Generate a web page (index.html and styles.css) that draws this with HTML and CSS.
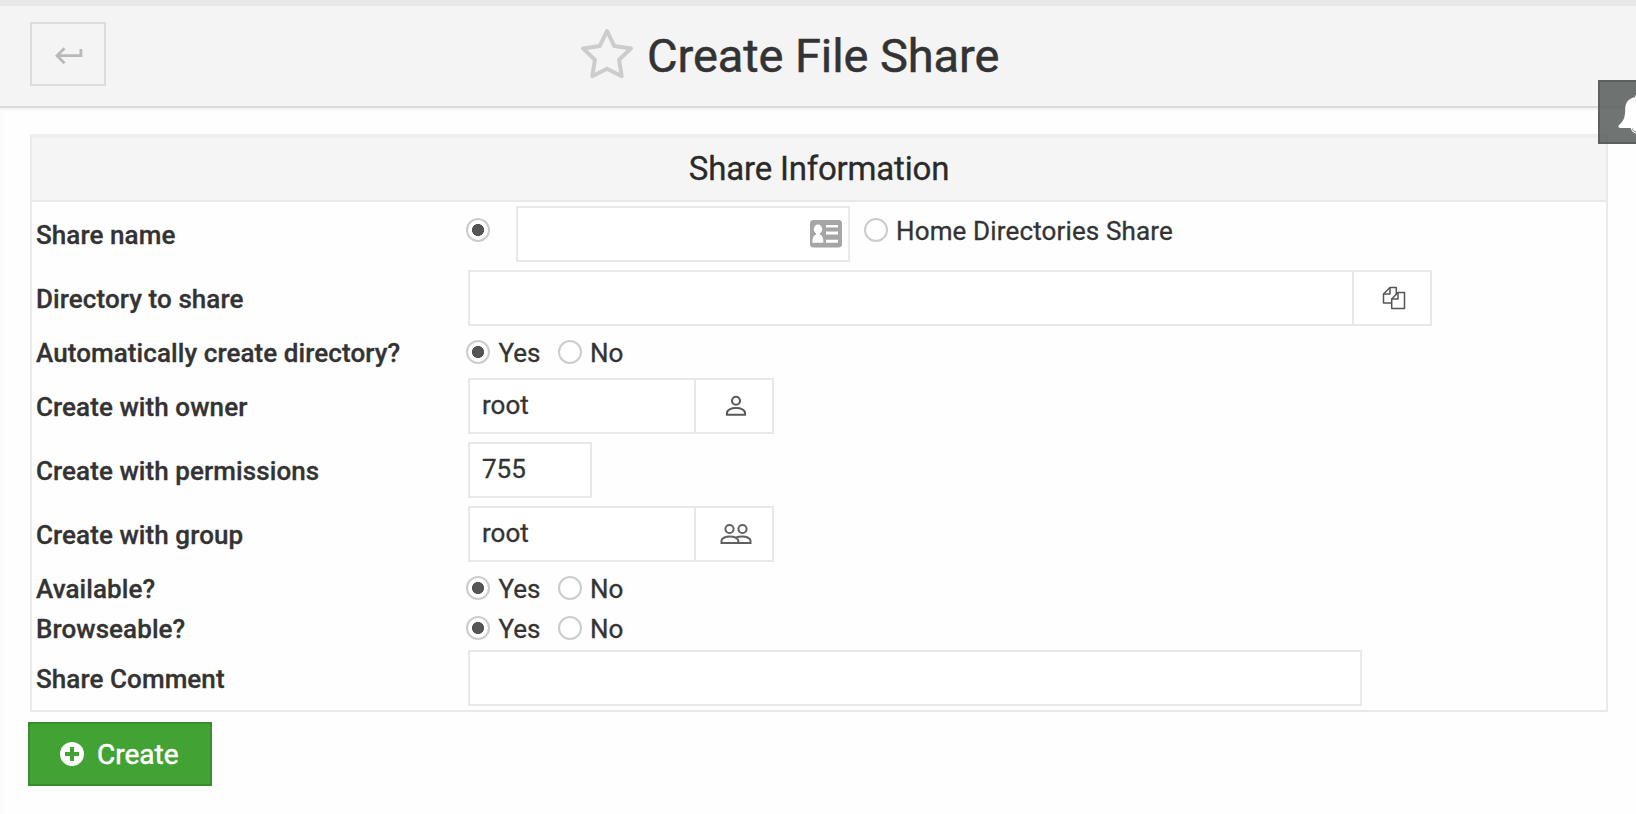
FILE: index.html
```html
<!DOCTYPE html>
<html lang="en">
<head>
<meta charset="utf-8">
<title>Create File Share</title>
<link rel="stylesheet" href="styles.css">
</head>
<body>
<header class="header">
  <button class="back" aria-label="Return">
    <svg width="28" height="18" viewBox="0 0 28 18" fill="none" stroke="#b9b9b9" stroke-width="2.8"><path d="M9.5 1.2 2 8.700l7.500 7.500M2 8.700h23.900V2"/></svg>
  </button>
  <h1 class="title">
    <svg class="star" width="54" height="52" viewBox="0 0 54 52" fill="none" stroke="#ccc" stroke-width="4" stroke-linejoin="round"><path d="M27 3 34.300 18.100 51 20.400 39.100 31.800 41.700 48.200 27 40.700 12.300 48.200 14.900 31.800 3 20.400 19.700 18.100z"/></svg>
    <span class="title-text">Create File Share</span>
  </h1>
</header>

<main class="content">
  <section class="panel">
    <h2 class="panel-head">Share Information</h2>
    <div class="row">
      <div class="label">Share name</div>
      <div class="value value-name">
        <span class="radio radio-on"></span>
        <div class="field field-name">
          <svg width="32" height="28" viewBox="0 0 32 28"><rect width="32" height="27.500" rx="3.500" fill="#a5a5a5"/><g fill="#fff"><ellipse cx="8" cy="9.300" rx="4.200" ry="4.700"/><path d="M6 12.500h4v2c2.500.8 3.400 3.500 3.400 8.300H2.400c0-4.800 1-7.500 3.600-8.300zM16 5h12v2.600H16zM16 11.500h12v3H16zM16 19.700h12v3H16z"/></g></svg>
        </div>
        <span class="radio"></span>
        <span class="option option-home">Home Directories Share</span>
      </div>
    </div>
    <div class="row">
      <div class="label">Directory to share</div>
      <div class="value">
        <div class="field field-dir"></div>
        <button class="picker" aria-label="Choose directory">
          <svg width="24" height="24" viewBox="0 0 24 24" fill="#fff" stroke="#555" stroke-width="1.500" stroke-linejoin="round"><path d="M8 1.500h6.300V17H1.500V8z"/><path d="M8 1.500V8H1.500" fill="none"/><path d="M16 6.500h6.500v16H9.700V13z"/><path d="M16 6.500V13H9.700" fill="none"/></svg>
        </button>
      </div>
    </div>
    <div class="row row-radio">
      <div class="label">Automatically create directory?</div>
      <div class="value value-radio"><span class="radio radio-on"></span><span class="option option-yes">Yes</span><span class="radio"></span><span class="option">No</span></div>
    </div>
    <div class="row">
      <div class="label">Create with owner</div>
      <div class="value">
        <div class="field field-user">root</div>
        <button class="picker" aria-label="Choose user">
          <svg width="22" height="22" viewBox="0 0 22 22" fill="none" stroke="#5a5a5a" stroke-width="2.100"><circle cx="11" cy="5.700" r="4"/><path d="M2 19.700h18v-1.900c0-2.900-4-4.800-9-4.800s-9 1.900-9 4.800z"/></svg>
        </button>
      </div>
    </div>
    <div class="row">
      <div class="label">Create with permissions</div>
      <div class="value"><div class="field field-perm">755</div></div>
    </div>
    <div class="row">
      <div class="label">Create with group</div>
      <div class="value">
        <div class="field field-user">root</div>
        <button class="picker" aria-label="Choose group">
          <svg width="32" height="22" viewBox="0 0 32 22" fill="none" stroke="#606060" stroke-width="2"><circle cx="9.500" cy="6" r="4.100"/><circle cx="22.500" cy="6" r="4.100"/><path d="M1.500 20h16.800v-2.400c0-2.300-3.700-4-8.400-4s-8.400 1.700-8.400 4zM15.600 14.700c1.900-.7 4.200-1.100 6.500-1.100 4.700 0 8.400 1.700 8.400 4V20H18.300"/></svg>
        </button>
      </div>
    </div>
    <div class="row row-radio">
      <div class="label">Available?</div>
      <div class="value value-radio"><span class="radio radio-on"></span><span class="option option-yes">Yes</span><span class="radio"></span><span class="option">No</span></div>
    </div>
    <div class="row row-tight">
      <div class="label">Browseable?</div>
      <div class="value value-radio"><span class="radio radio-on"></span><span class="option option-yes">Yes</span><span class="radio"></span><span class="option">No</span></div>
    </div>
    <div class="row">
      <div class="label">Share Comment</div>
      <div class="value"><div class="field field-comment"></div></div>
    </div>
  </section>
  <button class="create">
    <svg width="24" height="24" viewBox="0 0 24 24"><circle cx="12" cy="12" r="12" fill="#fff"/><path d="M12 5v14M5 12h14" stroke="#43a234" stroke-width="4"/></svg>
    <span class="create-text">Create</span>
  </button>
</main>

<div class="notify">
  <svg width="40" height="44" viewBox="0 0 40 44"><path d="M20 2c-1.700 0-2.900 1.200-2.900 2.600v.7C10 6.500 7.200 11 7.200 17.500c0 8-1.800 12-6.400 15.700-.8 1-.3 2.800 1.300 2.800h35.800c1.600 0 2.100-1.800 1.300-2.800-4.600-3.700-6.400-7.700-6.400-15.700C32.800 11 30 6.500 22.900 5.300v-.7C22.900 3.200 21.700 2 20 2z" fill="#fff"/><path d="M12.700 35c0 4 3.300 6.800 7.300 6.800s7.300-2.800 7.300-6.800z" fill="#fff"/><path d="M14.500 36.500c0 2 2 3.700 4.500 3.700" fill="none" stroke="#6f7371" stroke-width=".8"/></svg>
</div>
</body>
</html>
```
FILE: styles.css
```css
* { box-sizing: border-box; }

body {
  margin: 0;
  height: 814px;
  overflow: hidden;
  position: relative;
  background: linear-gradient(to right, #f9f9f9, #fefefe 3px);
  color: #333;
  font: 400 26px/30px Roboto, sans-serif;
}

button { font: inherit; padding: 0; }

.header {
  height: 108px;
  display: grid;
  grid-template-columns: 550px 1fr;
  align-items: start;
  padding: 16px 0 0 30px;
  background: #f4f4f4;
  border-top: 6px solid #e8e8e8;
  border-bottom: 2px solid #dcdcdc;
  box-shadow: 0 1px 3px rgba(0, 0, 0, .08);
}

.back {
  width: 76px;
  height: 64px;
  display: flex;
  align-items: center;
  justify-content: center;
  padding: 3px 0 0 1px;
  background: transparent;
  border: 2px solid #dcdcdc;
}

.title {
  display: flex;
  align-items: center;
  gap: 13px;
  height: 66px;
  margin: 0;
  font-size: 47px;
  font-weight: 400;
}
.star { margin-top: -2px; }
.title-text { padding-top: 2px; letter-spacing: -.08px; -webkit-text-stroke: .5px #333; }

.content { padding: 26px 28px 0 30px; }

.panel {
  height: 578px;
  border: 2px solid #e9e9e9;
  border-top: 4px solid #efefef;
  background: #fefefe;
}

.panel-head {
  height: 64px;
  margin: 0;
  padding-top: 1px;
  background: #f5f5f5;
  border-bottom: 2px solid #e9e9e9;
  color: #2a2a2a;
  font-size: 33px;
  line-height: 60px;
  font-weight: 400;
  letter-spacing: -.2px;
  text-align: center;
  -webkit-text-stroke: .3px #2a2a2a;
}

.row {
  display: grid;
  grid-template-columns: 432px 1fr;
  align-items: center;
  height: 64px;
  padding-left: 4px;
}
.row-radio { height: 44px; }
.row-tight { height: 36px; }

.label { padding-top: 2px; font-weight: 500; letter-spacing: .08px; -webkit-text-stroke: .3px #333; }

.value { display: flex; align-items: center; }
.value-radio { margin-left: -2px; }
.value-name { margin-left: -2px; }
.value-name > .radio { margin-bottom: 8px; }

.radio {
  flex: none;
  width: 24px;
  height: 24px;
  border: 2px solid #ccc;
  border-radius: 50%;
  background: #fff;
}
.radio-on { background: radial-gradient(circle, #555 5.700px, #fff 6.300px); }

.option { padding: 2px 0 0 8px; -webkit-text-stroke: .3px #333; }
.option-yes { width: 68px; padding-left: 8.500px; }
.option-home { padding: 0 0 6px 8px; letter-spacing: .14px; }

.field {
  height: 56px;
  display: flex;
  align-items: center;
  padding: 0 0 2px 12px;
  background: #fff;
  border: 2px solid #e8e8e8;
  -webkit-text-stroke: .3px #333;
}
.field-name { width: 334px; margin: 0 14px 0 26px; padding: 0 6px 0 0; justify-content: flex-end; }
.field-dir { width: 886px; }
.field-user { width: 228px; }
.field-perm { width: 124px; }
.field-comment { width: 894px; }

.picker {
  width: 80px;
  height: 56px;
  display: flex;
  align-items: center;
  justify-content: center;
  margin-left: -2px;
  padding-left: 3px;
  background: #fff;
  border: 2px solid #e8e8e8;
}

.create {
  display: flex;
  align-items: center;
  gap: 13px;
  width: 184px;
  height: 64px;
  margin: 10px 0 0 -2px;
  padding-left: 30px;
  background: #43a234;
  border: 2px solid #388e2c;
  color: #fff;
  font-size: 28px;
}
.create-text { padding-top: 1px; -webkit-text-stroke: .5px #fff; }

/* Notification tab that hangs off the right edge */
.notify {
  position: absolute;
  top: 80px;
  right: -40px;
  width: 78px;
  height: 64px;
  padding: 10px 0 0 18px;
  background: rgba(80, 86, 84, .82);
  border: 2px solid rgba(80, 80, 80, .55);
}
```
